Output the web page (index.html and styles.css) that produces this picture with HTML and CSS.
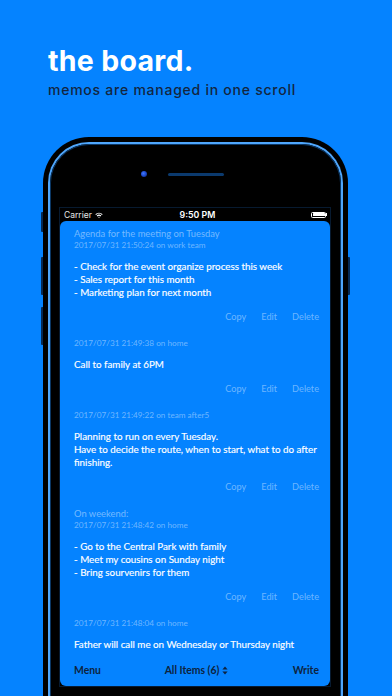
FILE: index.html
```html
<!DOCTYPE html>
<html lang="en">
<head>
<meta charset="utf-8">
<title>the board.</title>
<link rel="stylesheet" href="styles.css">
</head>
<body>
<div class="page">
  <header class="hero">
    <h1 class="title">the board.</h1>
    <p class="subtitle">memos are managed in one scroll</p>
  </header>

  <div class="phone">
    <span class="side-btn btn-mute"></span>
    <span class="side-btn btn-vol-up"></span>
    <span class="side-btn btn-vol-down"></span>
    <span class="side-btn btn-power"></span>
    <div class="ring">
      <div class="bezel">
        <div class="sensors">
          <span class="camera"></span>
          <span class="speaker"></span>
        </div>
        <div class="screen">
          <div class="statusbar">
            <div class="sb-left">
              <span>Carrier</span>
              <svg class="wifi" width="8" height="6" viewBox="0 0 8 6">
                <path d="M0.3 2.2 A5.2 5.2 0 0 1 7.7 2.2 L6.9 3 A4.1 4.1 0 0 0 1.1 3 Z" fill="#fff"/>
                <path d="M1.7 3.6 A3.2 3.2 0 0 1 6.3 3.6 L5.5 4.4 A2.1 2.1 0 0 0 2.5 4.4 Z" fill="#fff"/>
                <path d="M3.2 5.1 A1.1 1.1 0 0 1 4.8 5.1 L4 5.9 Z" fill="#fff"/>
              </svg>
            </div>
            <div class="sb-time">9:50 PM</div>
            <div class="sb-right">
              <span class="battery"><span class="battery-fill"></span></span>
              <span class="battery-nub"></span>
            </div>
          </div>

          <div class="app">
            <div class="memos">
              <article class="memo">
                <div class="memo-title">Agenda for the meeting on Tuesday</div>
                <div class="memo-date">2017/07/31 21:50:24 on work team</div>
                <div class="memo-body">- Check for the event organize process this week<br>- Sales report for this month<br>- Marketing plan for next month</div>
                <div class="memo-actions"><span>Copy</span><span>Edit</span><span>Delete</span></div>
              </article>
              <article class="memo">
                <div class="memo-date">2017/07/31 21:49:38 on home</div>
                <div class="memo-body">Call to family at 6PM</div>
                <div class="memo-actions"><span>Copy</span><span>Edit</span><span>Delete</span></div>
              </article>
              <article class="memo">
                <div class="memo-date">2017/07/31 21:49:22 on team after5</div>
                <div class="memo-body">Planning to run on every Tuesday.<br>Have to decide the route, when to start, what to do after finishing.</div>
                <div class="memo-actions"><span>Copy</span><span>Edit</span><span>Delete</span></div>
              </article>
              <article class="memo">
                <div class="memo-title">On weekend:</div>
                <div class="memo-date">2017/07/31 21:48:42 on home</div>
                <div class="memo-body">- Go to the Central Park with family<br>- Meet my cousins on Sunday night<br>- Bring sourvenirs for them</div>
                <div class="memo-actions"><span>Copy</span><span>Edit</span><span>Delete</span></div>
              </article>
              <article class="memo">
                <div class="memo-date">2017/07/31 21:48:04 on home</div>
                <div class="memo-body">Father will call me on Wednesday or Thursday night</div>
              </article>
            </div>
            <nav class="toolbar">
              <span class="tb-left">Menu</span>
              <span class="tb-center">All Items (6)
                <svg class="sort" width="6" height="9" viewBox="0 0 6 9">
                  <path d="M3 0.5 L5.6 3.6 L0.4 3.6 Z" fill="#0d2340"/>
                  <path d="M3 8.5 L5.6 5.4 L0.4 5.4 Z" fill="#0d2340"/>
                </svg>
              </span>
              <span class="tb-right">Write</span>
            </nav>
          </div>
        </div>
      </div>
    </div>
  </div>
</div>
</body>
</html>
```
FILE: styles.css
```css
* { box-sizing: border-box; }

html, body {
  margin: 0;
  padding: 0;
  width: 392px;
  height: 696px;
  overflow: hidden;
  background: #0583ff;
}

.page {
  width: 392px;
  height: 696px;
  overflow: hidden;
  font-family: Inter, "Noto Sans", sans-serif;
}

.hero {
  padding: 43.5px 0 0 48px;
}

.title {
  margin: 0;
  font-size: 28.5px;
  line-height: 34px;
  font-weight: 700;
  letter-spacing: 0.3px;
  color: #ffffff;
}

.subtitle {
  margin: 3.5px 0 0;
  font-size: 14px;
  line-height: 18px;
  font-weight: 500;
  letter-spacing: 0.75px;
  color: #13263f;
}

/* phone */
.phone {
  position: relative;
  margin: 38px 0 0 43px;
  width: 305px;
  height: 580px;
  background: #000;
  border-radius: 46px 46px 0 0;
  padding: 5px 5px 0;
}

.side-btn {
  position: absolute;
  width: 2px;
  background: #062a55;
  border-radius: 1px 0 0 1px;
}
.btn-mute { left: -2px; top: 75px; height: 20px; }
.btn-vol-up { left: -2px; top: 120px; height: 38px; }
.btn-vol-down { left: -2px; top: 170px; height: 38px; }
.btn-power { right: -2px; top: 120px; height: 38px; border-radius: 0 1px 1px 0; }

.ring {
  height: 100%;
  border: 2px solid #4fa6fb;
  border-bottom: 0;
  border-radius: 41px 41px 0 0;
}

.bezel {
  height: 100%;
  background: #000;
  border: 1px solid #0b3764;
  border-bottom: 0;
  border-radius: 39px 39px 0 0;
  padding: 0 9px 0 9px;
}

.sensors {
  height: 63px;
  display: flex;
  align-items: flex-start;
  padding: 26px 0 0 81px;
  gap: 21px;
}

.camera {
  width: 6px;
  height: 6px;
  border-radius: 50%;
  background: radial-gradient(circle at 40% 40%, #3f78ff 0, #1a44c4 55%, #0b1f5a 100%);
}

.speaker {
  margin-top: 1.5px;
  width: 56px;
  height: 3px;
  border-radius: 2px;
  background: #0b3a6e;
}

.screen {
  width: 270px;
  background: #000;
  box-shadow: 0 0 0 1px #071a30;
  font-family: Lato, "Noto Sans", sans-serif;
}

.statusbar {
  height: 13px;
  display: grid;
  grid-template-columns: 1fr auto 1fr;
  align-items: center;
  padding: 0 3px 0 4px;
  font-family: Inter, sans-serif;
  font-size: 8.5px;
  color: #e8e8e8;
}

.sb-left {
  display: flex;
  align-items: center;
  gap: 3px;
}

.sb-time {
  font-weight: 600;
  font-size: 8.8px;
  color: #fff;
  padding-left: 4px;
}

.sb-right {
  display: flex;
  justify-content: flex-end;
  align-items: center;
}

.battery {
  width: 15px;
  height: 6px;
  border: 1px solid #fff;
  border-radius: 1.5px;
  padding: 0.5px;
  display: flex;
}
.battery-fill {
  flex: 1;
  background: #fff;
  border-radius: 0.5px;
}
.battery-nub {
  width: 1px;
  height: 2.5px;
  background: #fff;
}

.app {
  height: 465px;
  background: #0583ff;
  border-radius: 6px;
  display: flex;
  flex-direction: column;
  overflow: hidden;
}

.memos {
  flex: 1;
  min-height: 0;
  overflow: hidden;
  padding: 7px 11px 0 14px;
  display: flex;
  flex-direction: column;
  gap: 15px;
}

.memo-title {
  font-size: 9.4px;
  line-height: 12px;
  color: rgba(255, 255, 255, 0.45);
}

.memo-date {
  font-size: 8.2px;
  line-height: 11px;
  color: rgba(255, 255, 255, 0.42);
}

.memo-body {
  margin-top: 9px;
  font-size: 9.8px;
  line-height: 13px;
  color: #ffffff;
  -webkit-text-stroke: 0.15px #ffffff;
}

.memo-actions {
  margin-top: 11px;
  display: flex;
  justify-content: flex-end;
  gap: 15px;
  font-size: 9.2px;
  line-height: 13px;
  color: rgba(255, 255, 255, 0.42);
}

.toolbar {
  flex: 0 0 32px;
  display: grid;
  grid-template-columns: 1fr auto 1fr;
  align-items: center;
  padding: 0 11px 0 14px;
  font-size: 10.4px;
  font-weight: 700;
  color: #0d2340;
}

.tb-center {
  display: flex;
  align-items: center;
  gap: 3px;
}

.tb-right {
  text-align: right;
}
```
